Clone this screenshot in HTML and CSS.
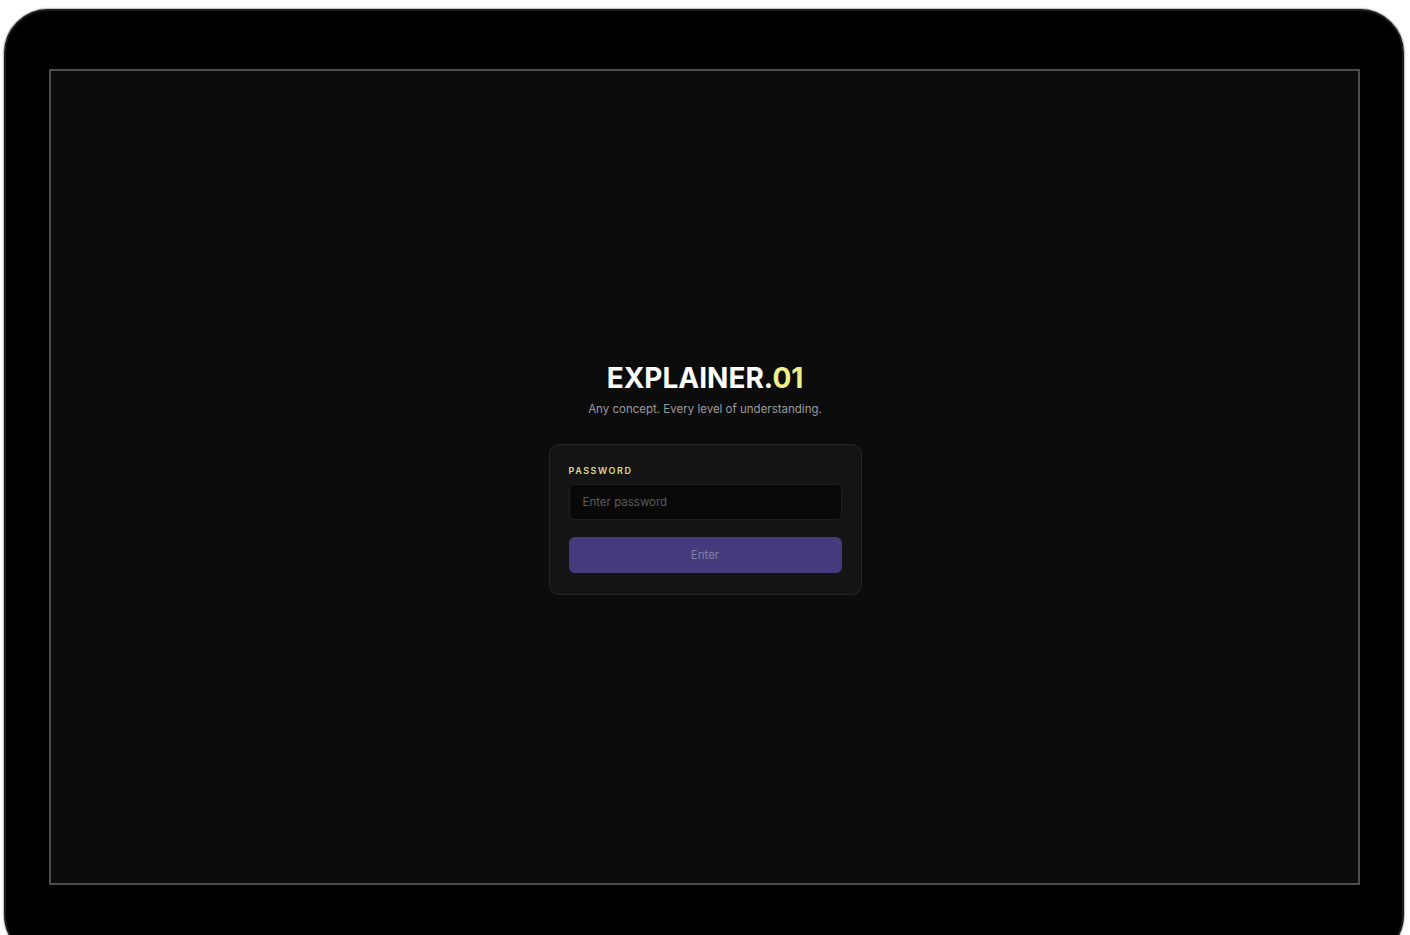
FILE: index.html
```html
<!DOCTYPE html>
<html lang="en">
<head>
    <meta charset="UTF-8">
    <meta name="viewport" content="width=device-width, initial-scale=1.0">
    <title>Explainer.01</title>
    <link rel="stylesheet" href="styles.css">
</head>
<body>
    <div class="laptop">
        <div class="screen">
            <div class="gate">
                <h1 class="brand">EXPLAINER.<span class="brand-num">01</span></h1>
                <p class="tagline">Any concept. Every level of understanding.</p>
                <form class="card" onsubmit="return false">
                    <label for="password">Password</label>
                    <input type="password" id="password" placeholder="Enter password">
                    <button type="submit">Enter</button>
                </form>
            </div>
        </div>
    </div>
</body>
</html>
```

FILE: styles.css
```css
html, body {
    margin: 0;
    padding: 0;
    height: 100%;
    overflow: hidden;
    background: #fff;
    font-family: Inter, 'Noto Sans', sans-serif;
}
.laptop {
    box-sizing: border-box;
    width: 1400px;
    height: 950px;
    margin: 9px 0 0 4px;
    background: #000;
    border: 2px solid #1c1c1c;
    border-radius: 44px;
    box-shadow: 0 0 0 1px #c4c4c4, 0 0 2px 1px rgba(0, 0, 0, 0.12);
    padding-top: 58px;
}
.screen {
    box-sizing: border-box;
    width: 1311px;
    height: 816px;
    margin: 0 auto;
    background: #0c0c0c;
    border: 2px solid #4d4d4d;
    display: flex;
    align-items: center;
    justify-content: center;
}
.gate {
    display: flex;
    flex-direction: column;
    align-items: center;
    margin: 2px 0 0 2px;
}
.brand {
    margin: 0;
    font-size: 28px;
    font-weight: 700;
    line-height: 34px;
    color: #ffffff;
    letter-spacing: 0;
}
.brand-num {
    color: #eef08a;
}
.tagline {
    margin: 6px 0 0;
    font-size: 11.5px;
    line-height: 16px;
    color: #9b9b9b;
}
.card {
    box-sizing: border-box;
    width: 313px;
    margin-top: 27px;
    padding: 20px 19px 21px;
    background: #141414;
    border: 1px solid #262626;
    border-radius: 10px;
    display: flex;
    flex-direction: column;
}
label {
    font-size: 9px;
    font-weight: 600;
    letter-spacing: 1.55px;
    text-transform: uppercase;
    color: #d9dd8c;
    line-height: 12px;
}
input {
    box-sizing: border-box;
    height: 36px;
    margin-top: 7px;
    padding: 0 13px;
    background: #080808;
    border: 1px solid #1e1e1e;
    border-radius: 6px;
    font-family: inherit;
    font-size: 11.5px;
    color: #ddd;
    outline: none;
}
input::placeholder {
    color: #5c5c5c;
}
button {
    height: 36px;
    margin-top: 17px;
    background: #433b7e;
    border: none;
    border-radius: 6px;
    font-family: inherit;
    font-size: 11.5px;
    color: #8480a3;
    cursor: pointer;
}
```
